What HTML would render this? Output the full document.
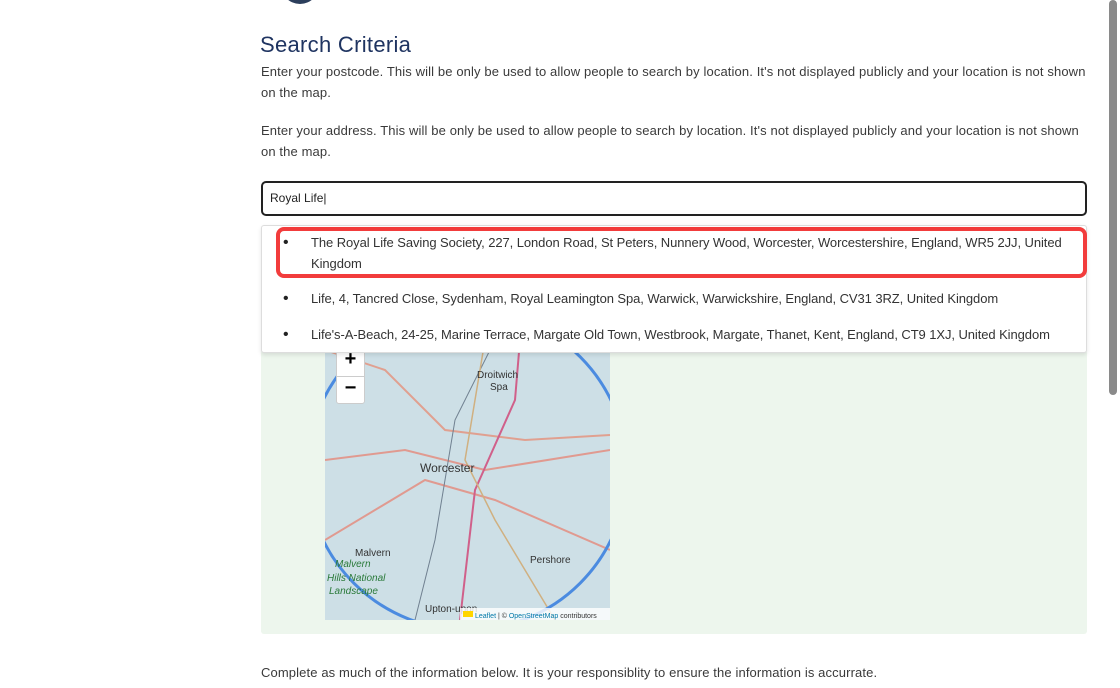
<!DOCTYPE html>
<html><head><style>
*{margin:0;padding:0;box-sizing:border-box}
body{width:1120px;height:688px;background:#fff;font-family:"Liberation Sans",sans-serif;color:#333;position:relative;overflow:hidden}
.a{position:absolute;white-space:nowrap}
.p{font-size:13px;line-height:21px;color:#3a3a3a;letter-spacing:0.12px}
.d{font-size:13px;line-height:21px;color:#333;letter-spacing:-0.08px}
.b{font-size:16px;line-height:21px;color:#222}
</style></head><body>
<div class="a" style="left:280px;top:-38px;width:40px;height:42px;border-radius:50%;background:#2c3e5c"></div>
<div class="a" style="left:260px;top:32px;font-size:22px;color:#1f3461;letter-spacing:0.3px">Search Criteria</div>
<div class="a p" style="left:261px;top:61px">Enter your postcode. This will be only be used to allow people to search by location. It's not displayed publicly and your location is not shown<br>on the map.</div>
<div class="a p" style="left:261px;top:120px">Enter your address. This will be only be used to allow people to search by location. It's not displayed publicly and your location is not shown<br>on the map.</div>
<div class="a" style="left:261px;top:181px;width:826px;height:35px;border:2px solid #222;border-radius:5px;font-size:12px;padding:8px 7px;color:#222">Royal Life|</div>
<div class="a" style="left:261px;top:350px;width:826px;height:284px;background:#edf6ed;border-radius:3px"></div>
<div class="a" style="left:325px;top:340px;width:285px;height:280px;background:#cfe0e6;overflow:hidden">
<svg width="285" height="280" viewBox="0 0 285 280">
<rect width="285" height="280" fill="#cddfe6"/>
<path d="M0 10 L60 30 L120 90 L200 100 L285 95" stroke="#e0a090" stroke-width="2" fill="none"/>
<path d="M0 120 L80 110 L160 130 L285 110" stroke="#e09a90" stroke-width="2" fill="none"/>
<path d="M0 200 L100 140 L170 160 L285 210" stroke="#e09a90" stroke-width="2" fill="none"/>
<path d="M195 0 L190 60 L150 150 L135 280" stroke="#d0608a" stroke-width="2" fill="none"/>
<path d="M170 0 L130 80 L110 200 L90 280" stroke="#708090" stroke-width="1" fill="none"/>
<path d="M160 0 L140 120 L170 180 L230 280" stroke="#d0b080" stroke-width="1.5" fill="none"/>
<circle cx="142" cy="130" r="160" stroke="#4b8be0" stroke-width="3" fill="none"/>
<text x="152" y="38" font-size="10" fill="#333" font-family="Liberation Sans">Droitwich</text>
<text x="165" y="50" font-size="10" fill="#333" font-family="Liberation Sans">Spa</text>
<text x="95" y="132" font-size="12" fill="#333" font-family="Liberation Sans">Worcester</text>
<text x="30" y="216" font-size="10" fill="#333" font-family="Liberation Sans">Malvern</text>
<text x="10" y="227" font-size="10" fill="#2a7a3a" font-style="italic" font-family="Liberation Sans">Malvern</text>
<text x="2" y="241" font-size="10" fill="#2a7a3a" font-style="italic" font-family="Liberation Sans">Hills National</text>
<text x="4" y="254" font-size="10" fill="#2a7a3a" font-style="italic" font-family="Liberation Sans">Landscape</text>
<text x="205" y="223" font-size="10" fill="#333" font-family="Liberation Sans">Pershore</text>
<text x="100" y="272" font-size="10" fill="#333" font-family="Liberation Sans">Upton-upon</text>
<rect x="135" y="268" width="150" height="12" fill="rgba(255,255,255,.8)"/>
<rect x="138" y="271" width="10" height="6" fill="#ffd500"/>
<text x="150" y="278" font-size="7" fill="#333" font-family="Liberation Sans"><tspan fill="#0078a8">Leaflet</tspan> | © <tspan fill="#0078a8">OpenStreetMap</tspan> contributors</text>
</svg>
<div class="a" style="left:11px;top:8px;width:29px;height:56px;background:#fff;border:1px solid #ccc;border-radius:3px"></div>
<div class="a" style="left:11px;top:8px;width:29px;text-align:center;font-size:20px;font-weight:bold;color:#000">+</div>
<div class="a" style="left:11px;top:36px;width:29px;border-top:1px solid #ccc;text-align:center;font-size:20px;font-weight:bold;color:#000">−</div>
</div>
<div class="a" style="left:261px;top:225px;width:826px;height:128px;background:#fff;border:1px solid #ddd;border-radius:3px;box-shadow:0 2px 4px rgba(0,0,0,.1)"></div>
<div class="a" style="left:276px;top:227px;width:811px;height:51px;border:4px solid #f23c3c;border-radius:8px"></div>
<div class="a b" style="left:283px;top:232px">•</div>
<div class="a d" style="left:311px;top:232px">The Royal Life Saving Society, 227, London Road, St Peters, Nunnery Wood, Worcester, Worcestershire, England, WR5 2JJ, United<br>Kingdom</div>
<div class="a b" style="left:283px;top:288px">•</div>
<div class="a d" style="left:311px;top:288px">Life, 4, Tancred Close, Sydenham, Royal Leamington Spa, Warwick, Warwickshire, England, CV31 3RZ, United Kingdom</div>
<div class="a b" style="left:283px;top:324px">•</div>
<div class="a d" style="left:311px;top:324px">Life's-A-Beach, 24-25, Marine Terrace, Margate Old Town, Westbrook, Margate, Thanet, Kent, England, CT9 1XJ, United Kingdom</div>
<div class="a p" style="left:261px;top:662px">Complete as much of the information below. It is your responsiblity to ensure the information is accurrate.</div>
<div class="a" style="left:1109px;top:0;width:8px;height:395px;background:#8a8a8a;border-radius:4px"></div>
</body></html>
